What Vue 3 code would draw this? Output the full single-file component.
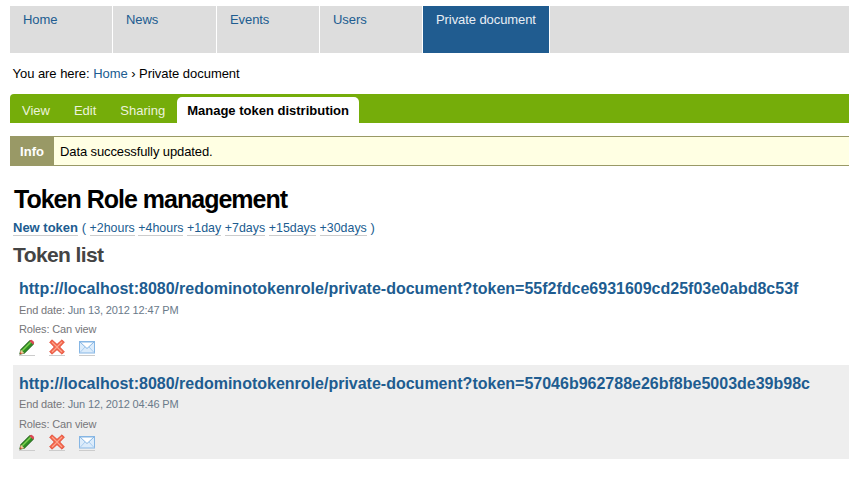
<script setup>
const nav = [
  { label: 'Home', w: 102 },
  { label: 'News', w: 103 },
  { label: 'Events', w: 102 },
  { label: 'Users', w: 102 },
  { label: 'Private document', w: 126, active: true }
]
const tabs = ['View', 'Edit', 'Sharing']
const times = ['+2hours', '+4hours', '+1day', '+7days', '+15days', '+30days']
const tokens = [
  { url: 'http://localhost:8080/redominotokenrole/private-document?token=55f2fdce6931609cd25f03e0abd8c53f', date: 'Jun 13, 2012 12:47 PM' },
  { url: 'http://localhost:8080/redominotokenrole/private-document?token=57046b962788e26bf8be5003de39b98c', date: 'Jun 12, 2012 04:46 PM', alt: true }
]
</script>

<template>
  <div class="page">
    <nav class="nav">
      <a v-for="n in nav" :key="n.label" class="nav-item" :class="{ active: n.active }" :style="{ width: n.w + 'px' }">{{ n.label }}</a>
      <div class="nav-rest"></div>
    </nav>
    <div class="crumbs">You are here: <a class="plain">Home</a> › Private document</div>
    <div class="tabs">
      <a v-for="t in tabs" :key="t" class="tab">{{ t }}</a>
      <a class="tab current">Manage token distribution</a>
    </div>
    <div class="info">
      <span class="info-label">Info</span>
      <span class="info-text">Data successfully updated.</span>
    </div>
    <h1>Token Role management</h1>
    <div class="actions">
      <a class="link strong">New token</a> (
      <template v-for="t in times" :key="t"><a class="link time">{{ t }}</a>{{ ' ' }}</template>)
    </div>
    <h2>Token list</h2>
    <div v-for="t in tokens" :key="t.url" class="token" :class="{ alt: t.alt }">
      <a class="url">{{ t.url }}</a>
      <div class="meta date">End date: <span class="when">{{ t.date }}</span></div>
      <div class="meta roles">Roles: Can view</div>
      <div class="icons">
        <a class="icon">
          <svg width="16" height="16" viewBox="0 0 16 16">
            <path d="M.8 15.200l1-4.600L11.200 1.200l3.600 3.600-9.400 9.400z" fill="#2f8f24" stroke="#17570f" stroke-width=".9" stroke-linejoin="round"/>
            <path d="M3.200 11.800L12 3" stroke="#7fd04f" stroke-width="1.500"/>
            <path d="M11 1.400a1.800 1.800 0 0 1 2.500 0l1.100 1.100a1.800 1.800 0 0 1 0 2.500l-.6.600-3.600-3.600z" fill="#dc4a58"/>
            <path d="M.8 15.200l1-4.600 3.600 3.600z" fill="#f1c79a"/>
            <path d="M.8 15.200l.5-2.200 1.700 1.700z" fill="#c8402a"/>
          </svg>
        </a>
        <a class="icon">
          <svg width="16" height="16" viewBox="0 0 16 16">
            <path d="M3 .8L8 5.300 13 .8 15.400 3.200 10.800 8l4.600 4.800-2.400 2.400L8 10.700l-5 4.500L.6 12.800 5.200 8 .6 3.200z" fill="#f4654a" stroke="#dc4430" stroke-width=".7" stroke-linejoin="round"/>
            <path d="M3 3l5 5 5-5M3 13l5-5 5 5" fill="none" stroke="#fca58e" stroke-width="1.200"/>
          </svg>
        </a>
        <a class="icon">
          <svg width="16" height="16" viewBox="0 0 16 16">
            <rect x=".5" y="2.500" width="15" height="11.500" fill="#dcecfb" stroke="#86b6e4"/>
            <path d="M1 3l7 6.500L15 3z" fill="#fff" stroke="#86b6e4"/>
            <path d="M1 13.500l5-5.500M15 13.500l-5-5.500" fill="none" stroke="#a9cdf0"/>
          </svg>
        </a>
      </div>
    </div>
  </div>
</template>

<style>
html, body { margin: 0; background: #fff; }
</style>

<style scoped>
.page {
  width: 849px;
  height: 492px;
  overflow: hidden;
  padding-top: 6px;
  box-sizing: border-box;
  font-family: "Liberation Sans", Arial, sans-serif;
  font-size: 13px;
  color: #000;
}
.nav {
  display: flex;
  height: 47px;
  margin-left: 10px;
  gap: 1px;
}
.nav-item {
  box-sizing: border-box;
  flex: none;
  background: #ddd;
  color: #205c90;
  padding: 6px 0 0 13px;
  line-height: 15px;
  letter-spacing: -.08px;
}
.nav-item.active {
  background: #205c90;
  color: #e8eef5;
}
.nav-rest {
  flex: 1;
  background: #ddd;
}
.crumbs {
  margin: 13px 0 0 12.500px;
  line-height: 15px;
  letter-spacing: -.04px;
}
.plain { color: #205c90; }
.tabs {
  display: flex;
  align-items: flex-end;
  margin: 13px 0 0 10px;
  height: 29px;
  background: #75ad0a;
  border-top-left-radius: 4px;
}
.tab {
  color: #ecf3dc;
  height: 26px;
  line-height: 28px;
  padding: 0 12px;
}
.tab.current {
  background: #fff;
  color: #000;
  font-weight: bold;
  padding: 0 10px;
  border-radius: 5px 5px 0 0;
}
.info {
  display: flex;
  margin: 13px 0 0 10px;
  height: 30px;
  box-sizing: border-box;
  background: #ffffe3;
  border-top: 1px solid #996;
  border-bottom: 1px solid #996;
  line-height: 30px;
}
.info-label {
  background: #996;
  color: #fff;
  font-weight: bold;
  width: 44px;
  text-align: center;
}
.info-text {
  margin-left: 6px;
  letter-spacing: -.11px;
}
h1 {
  margin: 17px 0 0 14px;
  font-size: 25px;
  line-height: 32px;
  letter-spacing: -1px;
  font-weight: bold;
}
.actions {
  margin: 4px 0 0 13px;
  line-height: 17px;
  color: #205c90;
}
.link {
  color: #205c90;
  border-bottom: 1px solid #ccc;
}
.time { font-size: 12.400px; }
.strong { font-weight: bold; }
h2 {
  margin: 5px 0 2px 13px;
  font-size: 21px;
  line-height: 26px;
  letter-spacing: -.6px;
  color: #444;
  font-weight: bold;
}
.token {
  margin: 0 0 0 13px;
  padding: 9px 6px 0;
  height: 95px;
  box-sizing: border-box;
}
.token.alt {
  background: #eee;
  height: 94px;
}
.url {
  display: block;
  color: #205c90;
  font-weight: bold;
  font-size: 16px;
  line-height: 20px;
  white-space: nowrap;
}
.meta {
  font-size: 11px;
  line-height: 13px;
  color: #76767a;
  letter-spacing: -.14px;
}
.date { margin-top: 5px; }
.when { color: #6a7a8a; }
.roles { margin-top: 6px; }
.alt .date { margin-top: 4px; }
.alt .roles { margin-top: 7px; }
.icons {
  display: flex;
  gap: 14px;
  margin-top: 3px;
}
.icon {
  display: block;
  height: 16px;
  border-bottom: 1px solid #ccc;
}
.icon svg { display: block; }
</style>
